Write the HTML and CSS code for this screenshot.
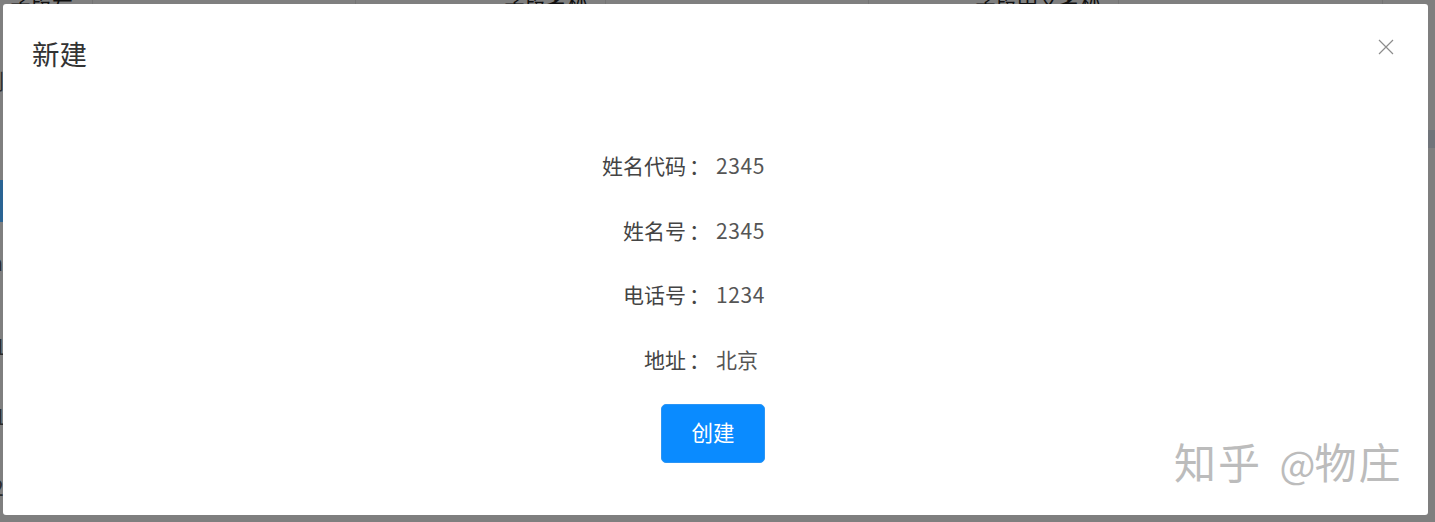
FILE: index.html
```html
<!DOCTYPE html>
<html lang="zh-CN">
<head>
    <meta charset="UTF-8">
    <meta name="viewport" content="width=device-width, initial-scale=1.0">
    <title>新建</title>
    <link rel="stylesheet" href="styles.css">
</head>
<body>
    <!-- Table behind the mask -->
    <div class="table-head">
        <span class="col col-code">字段号</span>
        <span class="col col-gap-a"></span>
        <span class="col col-name">字段名称</span>
        <span class="col col-gap-b"></span>
        <span class="col col-cn">字段中文名称</span>
        <span class="col col-gap-c"></span>
    </div>

    <!-- Scraps of the page showing beside the dialog -->
    <div class="side-strip">
        <span class="side-mark mark-top">删</span>
        <span class="side-btn"></span>
        <span class="side-mark mark-a">a</span>
        <span class="side-mark mark-b">1</span>
        <span class="side-mark mark-c">1</span>
        <span class="side-mark mark-d">2</span>
    </div>
    <div class="side-patch"></div>

    <div class="modal">
        <div class="modal-header">
            <h2 class="modal-title">新建</h2>
            <button class="modal-close" type="button" aria-label="关闭">
                <svg viewBox="0 0 16 16" width="16" height="16">
                    <path d="M1 1 L15 15 M15 1 L1 15" stroke="#8c8c8c" stroke-width="1.2" fill="none"/>
                </svg>
            </button>
        </div>
        <form class="modal-form">
            <label class="form-label">姓名代码<span class="colon">：</span></label>
            <span class="form-value num">2345</span>
            <label class="form-label">姓名号<span class="colon">：</span></label>
            <span class="form-value num">2345</span>
            <label class="form-label">电话号<span class="colon">：</span></label>
            <span class="form-value num">1234</span>
            <label class="form-label">地址<span class="colon">：</span></label>
            <span class="form-value">北京</span>
            <button class="btn-submit" type="button">创建</button>
        </form>
        <div class="watermark">知乎 <span class="watermark-at">@</span>物庄</div>
    </div>
</body>
</html>
```

FILE: styles.css
```css
body {
    margin: 0;
    height: 522px;
    overflow: hidden;
    position: relative;
    background-color: #7f7f7f;
    font-family: "Noto Sans CJK SC", "Noto Sans", sans-serif;
}
.table-head {
    display: flex;
    height: 4px;
    overflow: hidden;
    color: #111;
    font-size: 21px;
}
.table-head .col {
    display: block;
    box-sizing: border-box;
    height: 4px;
    border-right: 1px solid #747474;
    white-space: nowrap;
    line-height: 0;
}
.col-code {
    width: 93px;
    padding-left: 10px;
}
.col-gap-a {
    width: 263px;
}
.col-name {
    width: 250px;
    padding-left: 148px;
}
.col-gap-b {
    width: 263px;
}
.col-cn {
    width: 250px;
    padding-left: 106px;
}
.col-gap-c {
    width: 264px;
}
.side-strip {
    position: absolute;
    left: 0;
    top: 0;
    width: 3px;
    height: 522px;
    overflow: hidden;
}
.side-btn {
    position: absolute;
    top: 180px;
    left: 0;
    width: 3px;
    height: 42px;
    background-color: #2a6494;
}
.side-mark {
    position: absolute;
    font-size: 21px;
    line-height: 24px;
    color: #2b2b2b;
}
.mark-top { left: -17px; top: 68px; }
.mark-a { left: -9px; top: 250px; }
.mark-b { left: -6px; top: 334px; }
.mark-c { left: -6px; top: 404px; }
.mark-d { left: -8px; top: 475px; }
.side-patch {
    position: absolute;
    left: 1428px;
    top: 130px;
    width: 7px;
    height: 18px;
    background-color: #70747a;
}
.modal {
    position: absolute;
    left: 3px;
    top: 4px;
    width: 1425px;
    height: 511px;
    background-color: #fff;
    border-radius: 3px;
    color: #444;
}
.modal-header {
    display: flex;
    justify-content: space-between;
    align-items: flex-start;
    padding: 29px 34px 0 29px;
}
.modal-title {
    margin: 0;
    font-size: 27.5px;
    line-height: 40px;
    font-weight: 400;
    color: #333;
}
.modal-close {
    border: none;
    background: none;
    padding: 0;
    margin-top: 6px;
    width: 16px;
    height: 16px;
    cursor: pointer;
}
.modal-form {
    display: grid;
    grid-template-columns: 113px 49px;
    column-gap: 14px;
    grid-auto-rows: 64.5px;
    align-items: center;
    width: 176px;
    margin: 60px 0 0 586px;
    font-size: 21px;
    line-height: 30px;
}
.form-label {
    text-align: right;
    white-space: nowrap;
    color: #444;
}
.colon {
    font-family: "Noto Sans CJK TC", sans-serif;
    margin-left: 3px;
    margin-right: -8px;
}
.form-value {
    white-space: nowrap;
    color: #555;
}
.form-value.num {
    letter-spacing: 0.6px;
}
.btn-submit {
    grid-column: 1 / 3;
    justify-self: end;
    align-self: start;
    width: 104px;
    height: 59px;
    margin-top: 13px;
    padding: 0 0 4px;
    border: 1px solid #2b95f5;
    border-radius: 5px;
    background-color: #0a8bff;
    color: #fff;
    font-family: inherit;
    font-size: 21.5px;
    cursor: pointer;
}
.watermark {
    position: absolute;
    left: 1171px;
    top: 428px;
    font-size: 42px;
    line-height: 58px;
    letter-spacing: 2px;
    white-space: nowrap;
    color: #bcbcbc;
}
.watermark-at {
    display: inline-block;
    margin: 0 -1px 0 6px;
    font-size: 38px;
    letter-spacing: 0;
}
```
